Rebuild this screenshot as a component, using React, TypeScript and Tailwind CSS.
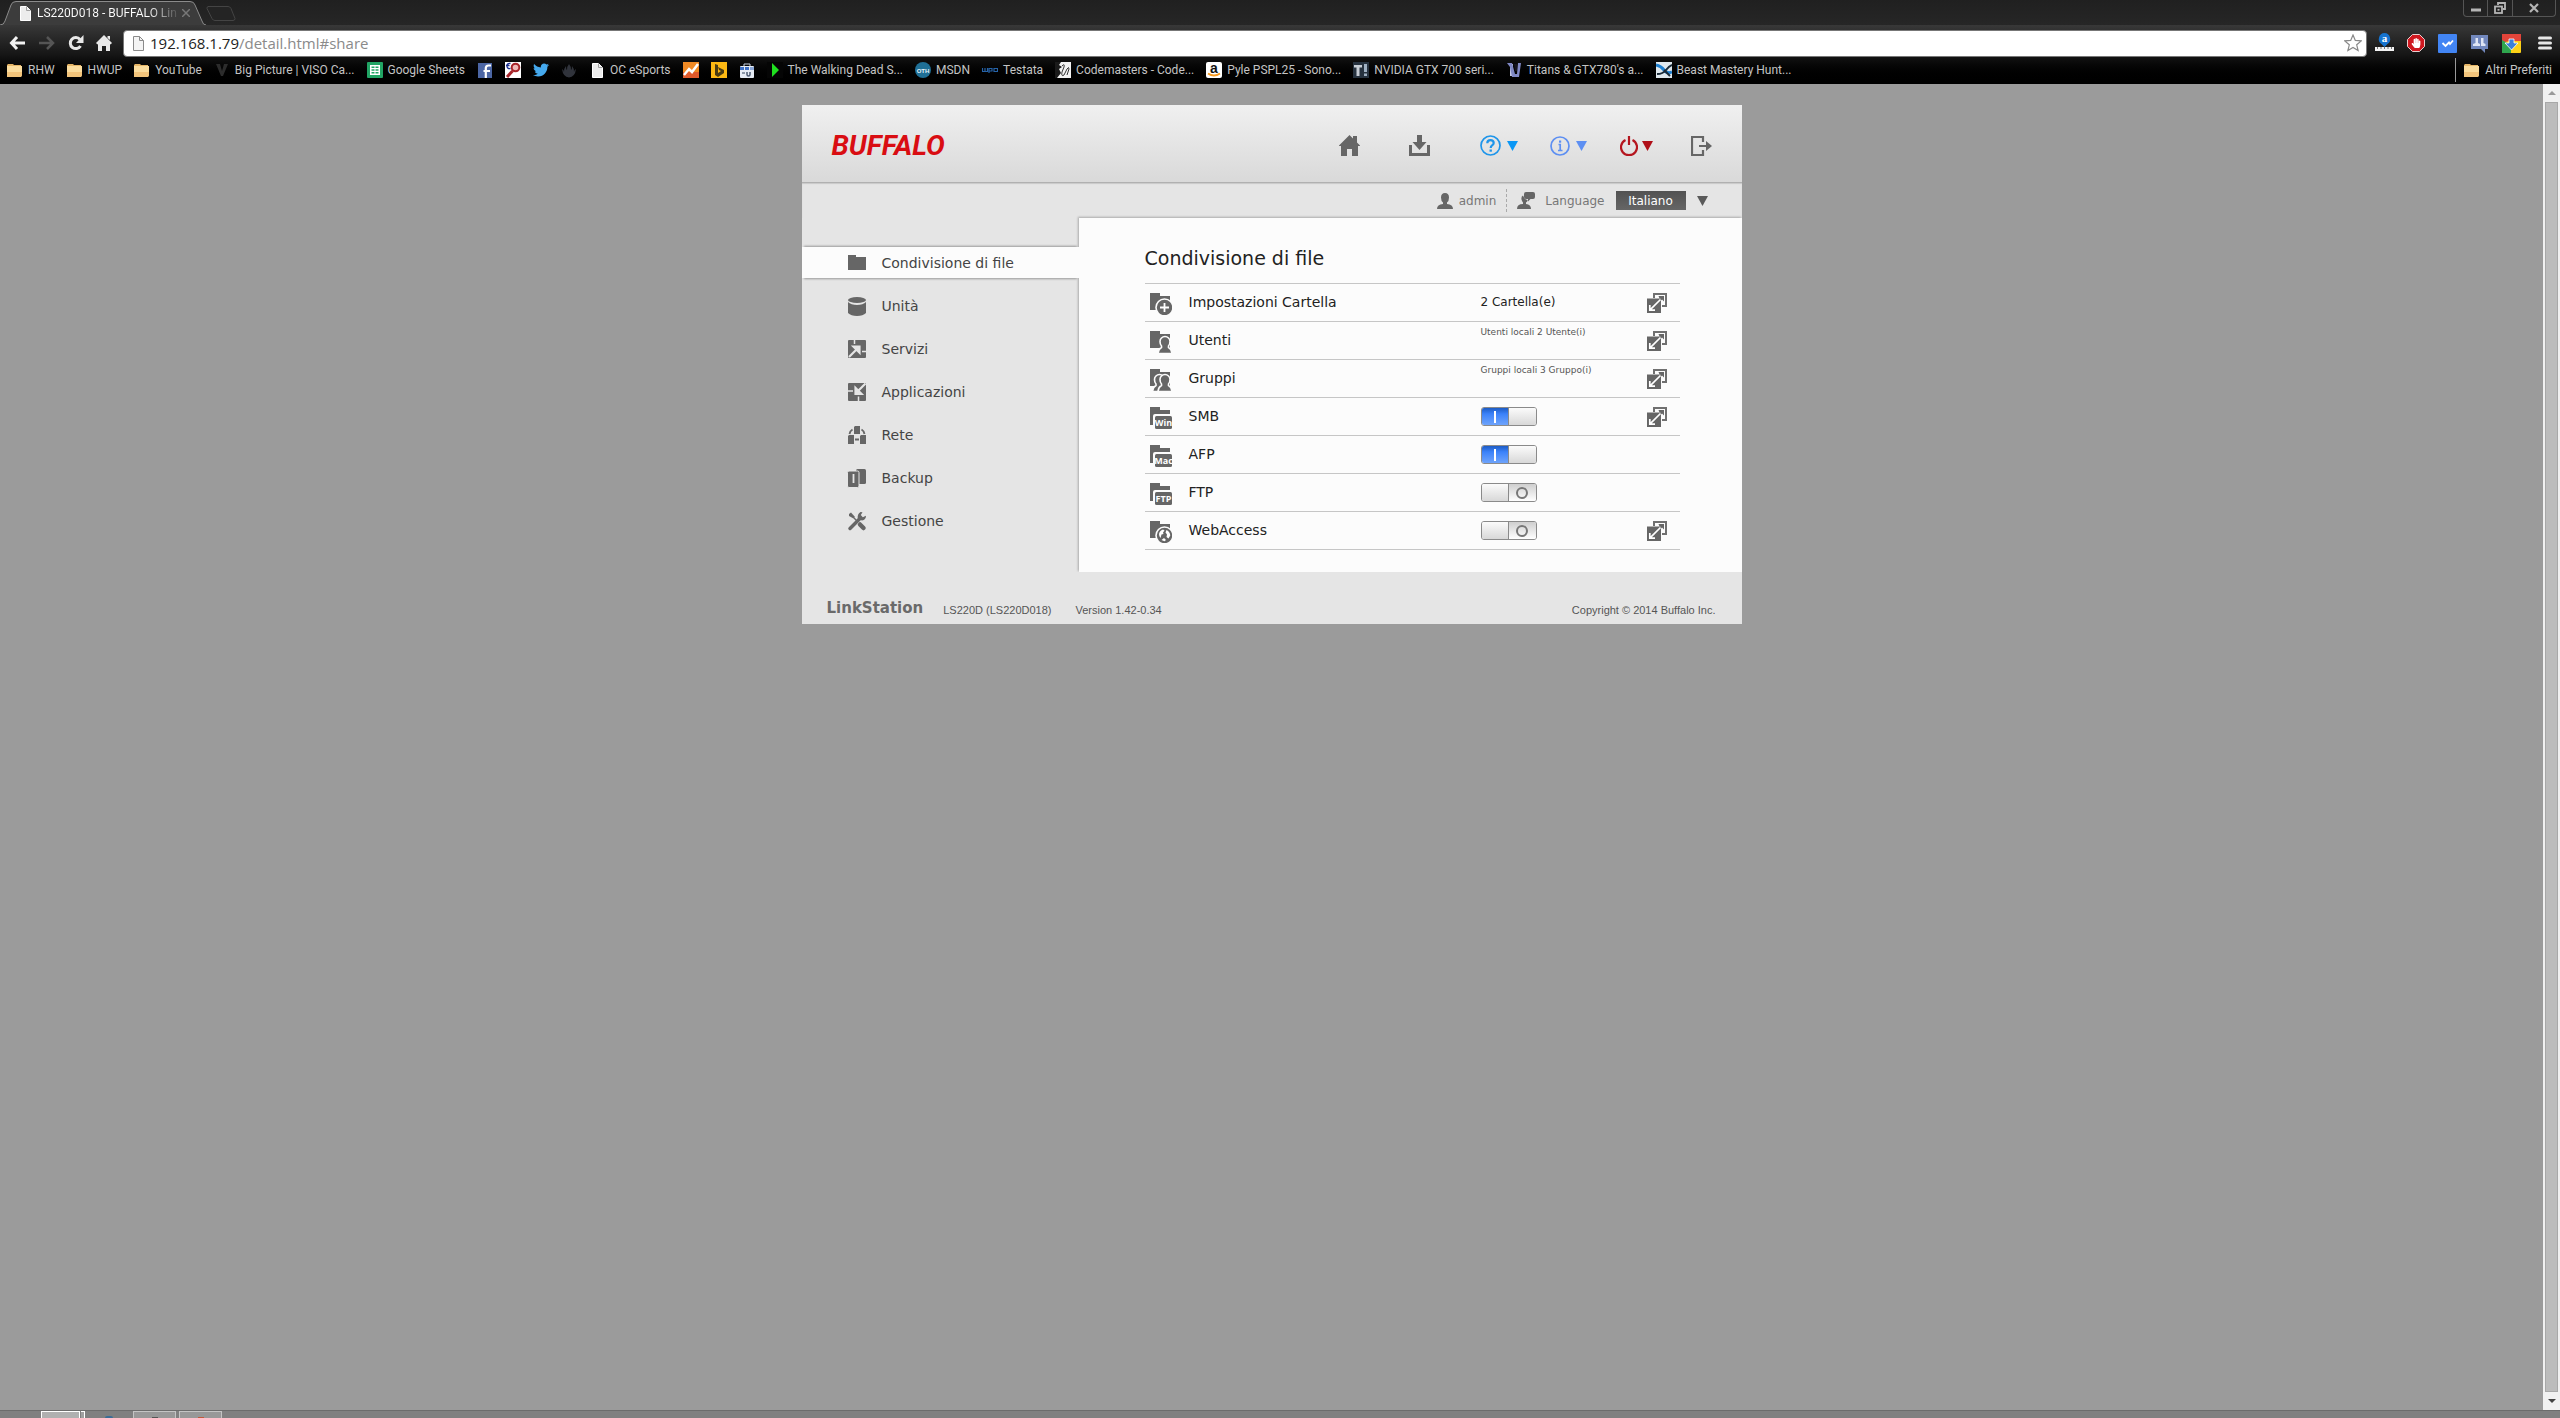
import React, { useState } from 'react';
import { FaTwitter, FaHandPaper } from 'react-icons/fa';

const FolderYellow = () => (
  <svg className="w-4 h-4 shrink-0" viewBox="0 0 16 16">
    <path d="M0 3l1-1h5l1 1h7v11H0z" fill="#e5b567" />
    <path d="M0 4h15v9l-1 2H0z" fill="#fbdc9d" />
    <path d="M0 10h15v3l-1 2H0z" fill="#f3c47b" />
  </svg>
);

const PageIcon = ({ outline = false }: { outline?: boolean }) => (
  <svg className="w-4 h-4 shrink-0" viewBox="0 0 16 16">
    <path
      d="M3.5 1.5h6l4 4v10h-10z"
      fill={outline ? '#f4f4f4' : '#ececec'}
      stroke={outline ? '#8a8a8a' : '#ffffff'}
    />
    <path d="M9.5 1.5v4h4" fill="none" stroke={outline ? '#8a8a8a' : '#a0a0a0'} />
  </svg>
);

const favicons: Record<string, React.ReactNode> = {
  viso: <path d="M2 2l5 12h2l5-12-4 0-2 7-2-7z" fill="#2c2c2c" />,
  sheets: (
    <>
      <rect width="16" height="16" rx="1" fill="#21a464" />
      <path d="M3 3h10v10H3z" fill="#fff" />
      <path d="M4.500 4.500h3v1.500h-3zM8.500 4.500h3v1.500h-3zM4.500 7.300h3v1.500h-3zM8.500 7.300h3v1.500h-3zM4.500 10h3v1.500h-3zM8.500 10h3v1.500h-3z" fill="#21a464" />
    </>
  ),
  facebook: (
    <>
      <rect x="1" y="1" width="14" height="15" fill="#4c66a4" />
      <path d="M8.800 16V6.200q0-2.700 2.700-2.700H14M6.500 9h6.500" stroke="#fff" strokeWidth="2.200" fill="none" />
    </>
  ),
  trova: (
    <>
      <rect width="16" height="16" fill="#fff" />
      <circle cx="10.500" cy="5.500" r="3.800" fill="#f0b8b8" stroke="#a8242a" strokeWidth="2" />
      <path d="M7.500 9L2 15" stroke="#a8242a" strokeWidth="3" />
      <path d="M5.500 1.500Q2 1 2 4t3.500 2.500M1 3.500h3.500" stroke="#1b2f8f" strokeWidth="1.300" fill="none" />
    </>
  ),
  flame: (
    <path d="M1 7q2 1 2 3 0-4 2-6 0 3 1 4 0-4 2-6 2 2 2 6 1-1 1-4 2 2 2 6 0-2 2-3-1 8-7 8.500Q2 15 1 7z" fill="#30333b" />
  ),
  analytics: (
    <>
      <rect width="16" height="16" fill="#f08a24" />
      <path d="M0 10h16v6H0z" fill="#e05a2b" />
      <path d="M1 13l5-6 3 3 6-8" stroke="#fff" strokeWidth="2.500" fill="none" />
    </>
  ),
  bing: (
    <>
      <rect width="16" height="16" fill="#fdb813" />
      <path d="M4 2l3 1v8l3-2-2-1-1-3 6 3v3l-6 4-3-2z" fill="#4a3b12" />
    </>
  ),
  store: (
    <>
      <path d="M5 4V2h6v2" stroke="#c7d2e2" fill="none" />
      <rect x="1" y="4" width="14" height="12" rx="1" fill="#e6ecf5" />
      <path d="M1 5h4v3H1zM6 5h4v3H6z" fill="#3d6fc4" />
      <path d="M11 5h4v3h-4z" fill="#8aa6d6" />
      <path d="M8 10v2.500q0 1.500 1.500 1.500T11 12.500V10" stroke="#4b5a72" strokeWidth="1.500" fill="none" />
      <path d="M3 10h3v2H3z" fill="#8b97a8" />
    </>
  ),
  play: (
    <>
      <rect width="16" height="16" fill="#050505" />
      <path d="M5 1l7 7-7 7z" fill="#1fe01f" />
    </>
  ),
  oth: (
    <>
      <circle cx="8" cy="8" r="8" fill="#1f6f96" />
      <text x="8" y="10.500" textAnchor="middle" fontSize="6" fontWeight="700" fill="#e5f2f8" fontFamily="Liberation Sans, sans-serif">OTH</text>
    </>
  ),
  wpo: (
    <path d="M.5 6v3.500h5V6M3 6v3M7 11V6.500h3v2.500H7M12 6.500h3.500v3H12z" stroke="#2663a8" strokeWidth="1.200" fill="none" />
  ),
  code: (
    <>
      <rect width="16" height="16" fill="#f2f2f2" />
      <path d="M0 0h6L4 3l3 2-3 2 2 4-4 5H0z" fill="#1a1a1a" />
      <path d="M7 4q3-3 2 1l-2 5q-1 5 2 3l3-6q2-3 2 0l-2 6" stroke="#333" fill="none" />
    </>
  ),
  amazon: (
    <>
      <rect width="16" height="16" rx="2" fill="#fff" />
      <text x="8" y="10.500" textAnchor="middle" fontSize="14" fontWeight="700" fill="#111" fontFamily="Liberation Sans, sans-serif">a</text>
      <path d="M2 11.500q6 4 12 0" stroke="#f79a1f" strokeWidth="1.800" fill="none" />
    </>
  ),
  ti: (
    <>
      <rect width="16" height="16" fill="#26323f" />
      <path d="M1 3h8v2.500H6.500V14h-3V5.500H1z" fill="#c5ccd4" />
      <path d="M11 2h3v8h-3zM11 11.500h3V14h-3z" fill="#9fb0c2" />
    </>
  ),
  titans: (
    <>
      <path d="M4 2h3v12H4z" fill="#c3c8e6" />
      <path d="M1 1h5l3 11h2l1-11h3l-2 14H6L4 5z" fill="#7f88c4" />
      <path d="M8 2h3v7H9z" fill="#14141f" />
    </>
  ),
  beast: (
    <>
      <rect width="16" height="16" fill="#dfe8ee" />
      <path d="M0 3q5 1 8 5t8 2" stroke="#1d7fd0" strokeWidth="3" fill="none" />
      <path d="M1 12q6 0 9-4t6-5M8 8l6 6" stroke="#1a2a38" strokeWidth="2" fill="none" />
    </>
  ),
};

type Bookmark = { icon: string; title?: string };

const bookmarks: Bookmark[] = [
  { icon: 'folder', title: 'RHW' },
  { icon: 'folder', title: 'HWUP' },
  { icon: 'folder', title: 'YouTube' },
  { icon: 'viso', title: 'Big Picture | VISO Ca...' },
  { icon: 'sheets', title: 'Google Sheets' },
  { icon: 'facebook' },
  { icon: 'trova' },
  { icon: 'twitter' },
  { icon: 'flame' },
  { icon: 'page', title: 'OC eSports' },
  { icon: 'analytics' },
  { icon: 'bing' },
  { icon: 'store' },
  { icon: 'play', title: 'The Walking Dead S...' },
  { icon: 'oth', title: 'MSDN' },
  { icon: 'wpo', title: 'Testata' },
  { icon: 'code', title: 'Codemasters - Code...' },
  { icon: 'amazon', title: 'Pyle PSPL25 - Sono...' },
  { icon: 'ti', title: 'NVIDIA GTX 700 seri...' },
  { icon: 'titans', title: "Titans & GTX780's a..." },
  { icon: 'beast', title: 'Beast Mastery Hunt...' },
];

const Favicon = ({ name }: { name: string }) => {
  if (name === 'folder') return <FolderYellow />;
  if (name === 'page') return <PageIcon />;
  if (name === 'twitter') return <FaTwitter className="w-4 h-4 shrink-0 text-[#45a9ee]" />;
  return (
    <svg className="w-4 h-4 shrink-0" viewBox="0 0 16 16">
      {favicons[name]}
    </svg>
  );
};

const BrowserChrome = () => (
  <header className="font-['Roboto',sans-serif] text-xs text-[#c4c4c4] shrink-0">
    <div className="flex items-end h-[25px] bg-linear-to-b from-[#202020] to-[#262626] relative">
      <div className="relative w-[206px] h-6">
        <svg className="absolute inset-0 w-full h-full" viewBox="0 0 206 24" preserveAspectRatio="none">
          <path d="M0 24Q4 24 5 20L11 4Q12 .5 16 .5H190Q194 .5 195 4L202 20Q203 24 206 24" fill="#3c3c3c" stroke="#8b8b8b" />
        </svg>
        <div className="relative flex items-center h-full pl-[17px] pr-4">
          <PageIcon />
          <span className="ml-1 whitespace-nowrap bg-linear-to-r from-white from-80% to-[#555] bg-clip-text text-transparent">
            LS220D018 - BUFFALO Lin
          </span>
          <button aria-label="Chiudi scheda" className="ml-auto">
            <svg className="w-2 h-2" viewBox="0 0 8 8">
              <path d="M0 0l8 8M8 0L0 8" stroke="#777" strokeWidth="1.500" />
            </svg>
          </button>
        </div>
      </div>
      <button aria-label="Nuova scheda" className="mb-1">
        <svg className="w-[30px] h-[15px]" viewBox="0 0 30 15">
          <path d="M2 .5h20q2 0 3 2l4 10q0 2-2 2H9q-2 0-3-2L1 2.500q0-2 1-2z" fill="#242424" stroke="#444" />
        </svg>
      </button>
      <div className="ml-auto mr-1 self-start flex h-[17px] rounded-b border border-t-0 border-[#555] divide-x divide-[#555]">
        <button aria-label="Riduci" className="w-6 grid place-items-center">
          <svg className="w-3 h-3" viewBox="0 0 12 12"><path d="M1 6.500h10v3H1z" fill="#b5b5b5" /></svg>
        </button>
        <button aria-label="Ripristina" className="w-[25px] grid place-items-center">
          <svg className="w-3 h-3" viewBox="0 0 12 12" fill="none" stroke="#b5b5b5" strokeWidth="1.800">
            <path d="M4 3V1h7v6H9" />
            <rect x="1" y="4.500" width="7" height="6.500" />
            <path d="M3.500 7.800h2" />
          </svg>
        </button>
        <button aria-label="Chiudi" className="w-[42px] grid place-items-center">
          <svg className="w-[10px] h-[10px]" viewBox="0 0 10 10"><path d="M1 1l8 8M9 1L1 9" stroke="#b5b5b5" strokeWidth="2.200" /></svg>
        </button>
      </div>
    </div>

    <div className="bg-linear-to-b from-[#383838] via-[#161616] to-black">
      <div className="flex items-center h-[34px] pt-0.5 pl-[9px] pr-2">
        <button aria-label="Indietro">
          <svg className="w-4 h-4" viewBox="0 0 16 16" fill="none" stroke="#f2f2f2" strokeWidth="3">
            <path d="M8 2L2.500 8 8 14M3 8h13" />
          </svg>
        </button>
        <button aria-label="Avanti" className="ml-[14px]">
          <svg className="w-4 h-4" viewBox="0 0 16 16" fill="none" stroke="#555" strokeWidth="2.500">
            <path d="M8 2l6 6-6 6M13 8H0" />
          </svg>
        </button>
        <button aria-label="Ricarica" className="ml-[13px]">
          <svg className="w-4 h-4" viewBox="0 0 16 16">
            <path d="M12.500 11A5.500 5.500 0 1 1 12 4.500" fill="none" stroke="#e8e8e8" strokeWidth="3" />
            <path d="M15.500 0v8H8z" fill="#e8e8e8" />
          </svg>
        </button>
        <button aria-label="Home" className="ml-3">
          <svg className="w-4 h-4" viewBox="0 0 16 16">
            <path d="M8 0l8 8-1.500 1.500L14 9v7h-4v-5H6v5H2V9l-.5.5L0 8zM11.500 1H14v4l-2.500-2z" fill="#e8e8e8" />
          </svg>
        </button>
        <div className="ml-[11px] flex flex-1 items-center h-[27px] pl-1.5 pr-1 bg-white border border-[#777] rounded-sm font-['Open_Sans',sans-serif]">
          <PageIcon outline />
          <div className="relative ml-1 flex-1 text-[15px] leading-6">
            <input
              aria-label="Indirizzo"
              defaultValue="192.168.1.79/detail.html#share"
              className="w-full bg-transparent text-transparent caret-black outline-none"
            />
            <div aria-hidden className="absolute inset-0 pointer-events-none text-[#8a8a8a]">
              <span className="text-[#222]">192.168.1.79</span>/detail.html#share
            </div>
          </div>
          <button aria-label="Aggiungi ai preferiti">
            <svg className="w-[18px] h-[18px]" viewBox="0 0 18 18">
              <path d="M9 1l2.300 5.400 5.900.5-4.500 3.900 1.400 5.800L9 13.500l-5.100 3.100 1.400-5.800L.8 6.900l5.900-.5z" fill="#fff" stroke="#888" strokeWidth="1.200" />
            </svg>
          </button>
        </div>
        <div className="flex items-center gap-[13px] ml-2">
          <button aria-label="Alexa">
            <svg className="w-[19px] h-5" viewBox="0 0 19 20">
              <path d="M9.500 0a6 6 0 0 1 3 11l-3 3-3-3a6 6 0 0 1 3-11z" fill="#1573cf" />
              <text x="9.500" y="9" textAnchor="middle" fontSize="11" fontWeight="700" fill="#fff" fontFamily="Liberation Serif, serif">a</text>
              <path d="M0 14h19v4H0z" fill="#f3f3f3" />
              <path d="M2.500 14v2M6 14v2M9.500 14v2M13 14v2M16.500 14v2" stroke="#777" />
            </svg>
          </button>
          <button aria-label="AdBlock" className="relative grid place-items-center w-[18px] h-[18px]">
            <svg className="absolute inset-0" viewBox="0 0 18 18">
              <path d="M5.500.5h7l5 5v7l-5 5h-7l-5-5v-7z" fill="#cf1820" stroke="#e8d0d0" />
            </svg>
            <FaHandPaper className="relative w-2.5 h-2.5 text-white" />
          </button>
          <button aria-label="Verifica">
            <svg className="w-[19px] h-[19px]" viewBox="0 0 19 19">
              <rect width="19" height="19" rx="1" fill="#4285f4" />
              <path d="M4.500 9l3 3 3.500-3.500 1 1.500 3-3.500" fill="none" stroke="#fff" strokeWidth="1.800" />
            </svg>
          </button>
          <button aria-label="Gruppi">
            <svg className="w-[19px] h-[19px]" viewBox="0 0 19 19">
              <path d="M1 1h17v14h-3v4l-4-4H1z" fill="#7288bd" />
              <path d="M5.500 4h2.500v5l2 1v2H3v-2l2.500-1zM11 4h2.500v5l2 1v2H11z" fill="#dfe5f4" />
            </svg>
          </button>
          <button aria-label="Download">
            <svg className="w-[19px] h-[19px]" viewBox="0 0 19 19">
              <rect width="19" height="19" rx="1" fill="#fcd116" />
              <path d="M0 0h19v7H7L0 9z" fill="#e2443a" />
              <path d="M0 6l9 5v8H0z" fill="#2fa64e" />
              <path d="M7 5h5v4h4l-6.500 7L3 9h4z" fill="#3b7fd8" stroke="#fff" strokeWidth=".8" />
            </svg>
          </button>
          <button aria-label="Menu" className="ml-1">
            <svg className="w-[14px] h-[14px]" viewBox="0 0 14 14">
              <path d="M1.500 2h11M1.500 7h11M1.500 12h11" stroke="#e6e6e6" strokeWidth="3" strokeLinecap="round" />
            </svg>
          </button>
        </div>
      </div>

      <nav aria-label="Preferiti" className="flex items-center h-[25px] pl-[7px] pr-2 pb-1">
        <ul className="flex items-center gap-3">
          {bookmarks.map((b) => (
            <li key={b.icon + b.title}>
              <a href="#" aria-label={b.title ?? b.icon} className="flex items-center gap-[5px] whitespace-nowrap">
                <Favicon name={b.icon} />
                {b.title}
              </a>
            </li>
          ))}
        </ul>
        <a href="#" className="ml-auto flex items-center gap-[5px] pl-2 h-6 border-l border-[#999] whitespace-nowrap">
          <FolderYellow />
          Altri Preferiti
        </a>
      </nav>
    </div>
  </header>
);

const menu = [
  {
    label: 'Condivisione di file',
    icon: <path d="M0 1h8v2h10v13H0z" />,
  },
  {
    label: 'Unità',
    icon: (
      <>
        <ellipse cx="9" cy="3" rx="9" ry="3" />
        <path d="M0 5q3 3 9 3t9-3v11q-3 3-9 3t-9-3z" />
      </>
    ),
  },
  {
    label: 'Servizi',
    icon: (
      <>
        <rect width="18" height="18" rx="1" />
        <path d="M1 17L9 9M5.500 6.500h6v6z" stroke="#e5e5e5" strokeWidth="2.200" fill="#e5e5e5" />
        <path d="M6.500 0v4M14 11.500h4" stroke="#e5e5e5" strokeWidth="1.500" />
      </>
    ),
  },
  {
    label: 'Applicazioni',
    icon: (
      <>
        <rect width="18" height="18" rx="1" />
        <path d="M17.500.5L10 8M7.500 5v6h6z" stroke="#e5e5e5" strokeWidth="2.200" fill="#e5e5e5" />
        <path d="M0 8h5M10.500 13.500V18" stroke="#e5e5e5" strokeWidth="1.500" />
      </>
    ),
  },
  {
    label: 'Rete',
    icon: (
      <>
        <path d="M7 0h5v8H6V1zM1 9h5v9H0v-8zM13 9h5v9h-6v-8z" />
        <path d="M4.500 3.500Q2 5 1.500 8M13.500 3.500Q16 5 16.500 8M7 13.500h4" fill="none" stroke="#666" strokeWidth="1.800" />
      </>
    ),
  },
  {
    label: 'Backup',
    icon: (
      <>
        <rect x="8" width="10" height="15" rx="1.500" />
        <rect x="-.5" y="2" width="11.500" height="16.500" rx="1.500" stroke="#e5e5e5" />
        <path d="M5.500 5v9" stroke="#e5e5e5" strokeWidth="1.800" />
      </>
    ),
  },
  {
    label: 'Gestione',
    icon: (
      <>
        <path d="M1 2l2-1.500 4 4.500-1.500 1.500L1 4z" />
        <path d="M6 6l4 4" stroke="#666" strokeWidth="1.500" />
        <path d="M12 12.500l3.500 3.500" stroke="#666" strokeWidth="4.500" strokeLinecap="round" />
        <path d="M2 16.500L12 6.500" stroke="#666" strokeWidth="3.500" strokeLinecap="round" />
        <path d="M12.500 0l2 .2L12.800 3l2 2.200L18 3.800Q18 8 14 8.500L9.800 7q-.8-5 2.700-7z" />
      </>
    ),
  },
];

const Person = ({ x }: { x: number }) => (
  <g transform={`translate(${x} 0)`}>
    <path
      d="M8.500 5.500a5 5 0 0 1 5 5q0 3-1.500 4.500v1.500q3 1.500 3.500 6H1.500q.5-4.500 3.500-6V15q-1.500-1.500-1.500-4.500a5 5 0 0 1 5-5z"
      stroke="#fcfcfc"
      strokeWidth="1.600"
    />
  </g>
);

const Badge = ({ text }: { text: string }) => (
  <>
    <path d="M0 0h10v3h10v4H5q-2 0-2 2v9H0z" />
    <rect x="5" y="9" width="17" height="13" rx="1.500" />
    <text x="13.500" y="19" textAnchor="middle" fontSize="9" fontWeight="700" fill="#fff" fontFamily="Liberation Sans Narrow, Open Sans, sans-serif">{text}</text>
  </>
);

const folder = <path d="M0 0h10v3h10v14H0z" />;

type Row = {
  label: string;
  icon: React.ReactNode;
  value?: string;
  note?: string;
  on?: boolean;
  edit: boolean;
};

const rows: Row[] = [
  {
    label: 'Impostazioni Cartella',
    icon: (
      <>
        {folder}
        <circle cx="14.500" cy="14.500" r="8.500" stroke="#fcfcfc" strokeWidth="1.600" />
        <path d="M14.500 10v9M10 14.500h9" stroke="#fff" strokeWidth="1.800" />
      </>
    ),
    value: '2 Cartella(e)',
    edit: true,
  },
  { label: 'Utenti', icon: <>{folder}<Person x={6.5} /></>, note: 'Utenti locali 2 Utente(i)', edit: true },
  { label: 'Gruppi', icon: <>{folder}<Person x={1} /><Person x={6.5} /></>, note: 'Gruppi locali 3 Gruppo(i)', edit: true },
  { label: 'SMB', icon: <Badge text="Win" />, on: true, edit: true },
  { label: 'AFP', icon: <Badge text="Mac" />, on: true, edit: false },
  { label: 'FTP', icon: <Badge text="FTP" />, on: false, edit: false },
  {
    label: 'WebAccess',
    icon: (
      <>
        {folder}
        <circle cx="14.500" cy="14.500" r="8.500" stroke="#fcfcfc" strokeWidth="1.600" />
        <path d="M9 13q.5-3.500 4-4.500l1.500 1-1.500 2 .5 1.500-2 .5L10.500 17Q9 15.500 9 13zM16.500 9q3.500 1.500 3.800 5.500l-1.800 3-2-1.500.5-2.500-1.500-2zM11.500 19l2.500-2 2 2-1.500 1.200z" fill="#fff" />
      </>
    ),
    on: false,
    edit: true,
  },
];

const Toggle = ({ initial, label }: { initial: boolean; label: string }) => {
  const [on, setOn] = useState(initial);
  return (
    <button
      role="switch"
      aria-checked={on}
      aria-label={label}
      onClick={() => setOn(!on)}
      className="mt-[9px] flex w-14 h-[19px] rounded-[3px] border border-[#8a8a8a] overflow-hidden"
    >
      {on ? (
        <>
          <span className="flex-1 h-full grid place-items-center bg-linear-to-b from-[#1d5cc4] via-[#3b82fa] via-35% to-[#6ea3fb]">
            <span className="w-0.5 h-3 bg-white" />
          </span>
          <span className="flex-1 h-full border-l border-[#8a8a8a] bg-linear-to-b from-[#fbfbfb] to-[#d8d8d8]" />
        </>
      ) : (
        <>
          <span className="flex-1 h-full border-r border-[#8a8a8a] bg-linear-to-b from-[#fbfbfb] to-[#d8d8d8]" />
          <span className="flex-1 h-full grid place-items-center bg-linear-to-b from-[#cfcfcf] to-white">
            <span className="w-3 h-3 rounded-full border-2 border-[#777]" />
          </span>
        </>
      )}
    </button>
  );
};

const EditIcon = () => (
  <svg className="w-5 h-5" viewBox="0 0 20 20">
    <path d="M7 5V1h12v12h-4" fill="none" stroke="#707070" strokeWidth="2" />
    <rect y="5.500" width="14" height="14.500" fill="#666" />
    <path d="M10.500 9.500L19 1" stroke="#fcfcfc" strokeWidth="0" />
    <path d="M14 6l2-2" stroke="#666" strokeWidth="1.600" />
    <path d="M11.500 3h5.500v5.500l-2-2-1 1V5.500h-1.500z" fill="#666" />
    <path d="M2.800 17.200L13.500 6.500M2.800 12v5.200H8" fill="none" stroke="#fff" strokeWidth="1.700" />
  </svg>
);

const Triangle = ({ color }: { color: string }) => (
  <svg className="w-[11px] h-[10px]" viewBox="0 0 11 10">
    <path d="M0 0h11L5.500 10z" fill={color} />
  </svg>
);

const ConsoleHeader = () => (
  <div className="flex items-center h-[77px] pl-[30px] pr-[30px] pt-1 bg-linear-to-b from-[#f0f0f0] to-[#d9d9d9]">
    <a href="#" className="font-['Liberation_Sans_Narrow','Roboto',sans-serif] text-[28px] leading-8 font-bold italic text-[#d90d12]">
      BUFFALO
    </a>
    <div className="ml-auto flex items-center text-[#666]">
      <button aria-label="Home" className="mr-[49px]">
        <svg className="w-[21px] h-[21px]" viewBox="0 0 21 21" fill="currentColor">
          <path d="M10.500 0L14 3.500V1h4v6.500l3 3V11h-2v10h-6v-7H8v7H2V11H0v-.5z" />
        </svg>
      </button>
      <button aria-label="Download" className="mr-[50px]">
        <svg className="w-[21px] h-[21px]" viewBox="0 0 21 21" fill="currentColor">
          <path d="M8 0h5v7h4.500l-7 8-7-8H8z" />
          <path d="M0 10h3v8h15v-8h3v11H0z" />
        </svg>
      </button>
      <button aria-label="Guida" className="mr-8 flex items-center gap-1.5">
        <svg className="w-[21px] h-[21px]" viewBox="0 0 21 21" fill="none" stroke="#1e95ea" strokeWidth="1.700">
          <circle cx="10.500" cy="10.500" r="9.500" />
          <path d="M7.300 8.200q0-3 3.200-3t3.200 2.700q0 1.400-1.600 2.500-1.400 1-1.400 2.600" strokeWidth="2.200" />
          <path d="M9.500 14.500h2.400v2.200H9.500z" fill="#1e95ea" stroke="none" />
        </svg>
        <Triangle color="#0a97f5" />
      </button>
      <button aria-label="Informazioni" className="mr-[33px] flex items-center gap-1.5">
        <svg className="w-5 h-5" viewBox="0 0 20 20" fill="none" stroke="#5d8ff2" strokeWidth="1.700">
          <circle cx="10" cy="10" r="9" />
          <path d="M8.500 8.500H10.200V14M8 14.500h4.500" />
          <path d="M9 4.500h2.200v2.200H9z" fill="#5d8ff2" stroke="none" />
        </svg>
        <Triangle color="#5d8ff2" />
      </button>
      <button aria-label="Spegni" className="mr-[38px] flex items-center gap-1">
        <svg className="w-[18px] h-5" viewBox="0 0 18 20" fill="none" stroke="#b5161f" strokeWidth="2.200">
          <path d="M5.500 4A8 8 0 1 0 12.500 4M9 0v9" />
        </svg>
        <Triangle color="#b00f18" />
      </button>
      <button aria-label="Esci">
        <svg className="w-[21px] h-5" viewBox="0 0 21 20" fill="none" stroke="currentColor" strokeWidth="2.200">
          <path d="M12 6V1H1v18h11v-5M8 10h8" />
          <path d="M15 5l6 5-6 5z" fill="currentColor" stroke="none" />
        </svg>
      </button>
    </div>
  </div>
);

const ConsoleUserBar = () => (
  <div className="flex items-center justify-end h-9 pr-[34px] border-t border-[#b0b0b0] shadow-[inset_0_1px_1px_#c8c8c8] text-xs text-[#777]">
    <svg className="w-4 h-4" viewBox="0 0 16 16" fill="#666">
      <path d="M8 0q4 0 4 4.500Q12 8 10 9.500V11q6 .5 6 5H0q0-4.500 6-5V9.500Q4 8 4 4.500 4 0 8 0z" />
    </svg>
    <span className="ml-1.5">admin</span>
    <span className="mx-[10px] h-[23px] border-l border-dashed border-[#aaa]" />
    <svg className="w-[18px] h-[17px]" viewBox="0 0 18 17" fill="#666">
      <path d="M6 3.500q-2 1-1.500 4Q5 9.500 6 10.500V12q-6 0-6 5h14q0-4.500-5-5v-1.500Q11 9 10.500 8 7 7 6 3.500z" />
      <path d="M9 0h7q2 0 2 2v3q0 2-2 2h-2.500L11 9.500V7H9Q7 7 7 5V2q0-2 2-2z" />
    </svg>
    <label htmlFor="language" className="ml-[10px]">Language</label>
    <select
      id="language"
      className="ml-[11px] w-[70px] h-[19px] appearance-none text-center bg-linear-to-b from-[#525252] to-[#666] text-white outline-none"
    >
      <option>Italiano</option>
    </select>
    <span className="ml-[11px]"><Triangle color="#5a5a5a" /></span>
  </div>
);

export default function App() {
  return (
    <div className="flex flex-col h-screen overflow-hidden bg-[#9b9b9b]">
      <BrowserChrome />

      <div className="flex flex-1 min-h-0">
        <div className="flex-1 pt-[21px]">
          <div className="w-full max-w-[940px] mx-auto bg-[#e5e5e5] font-['DejaVu_Sans',sans-serif]">
            <ConsoleHeader />
            <ConsoleUserBar />

            <div className="flex">
              <ul className="w-[277px] shrink-0 pt-[29px] flex flex-col gap-3">
                {menu.map((m, i) => (
                  <li key={m.label}>
                    <a
                      href="#"
                      className={`flex items-center h-[31px] pl-[46px] gap-4 text-sm text-[#444] ${
                        i === 0 ? 'relative z-10 bg-[#fcfcfc] shadow-[0_3px_2px_-2px_#999,0_-3px_2px_-2px_#999]' : ''
                      }`}
                    >
                      <svg className="w-[18px] h-[18px] overflow-visible" viewBox="0 0 18 18" fill="#666">
                        {m.icon}
                      </svg>
                      {m.label}
                    </a>
                  </li>
                ))}
              </ul>

              <main className="relative flex-1 bg-[#fcfcfc] pl-[66px] pr-[62px] pt-6 pb-[22px] shadow-[-1px_-1px_2px_#aaa]">
                <h1 className="text-[19px] leading-8 mb-[9px] text-[#222]">Condivisione di file</h1>
                <ul className="border-t border-[#c6c6c6]">
                  {rows.map((r) => (
                    <li key={r.label} className="flex h-[38px] pl-[5px] border-b border-[#c6c6c6] text-[#222]">
                      <svg className="w-[22px] h-[22px] mt-[9px] shrink-0" viewBox="0 0 22 22" fill="#666">
                        {r.icon}
                      </svg>
                      <span className="ml-[17px] w-[292px] text-sm leading-9">{r.label}</span>
                      <div className="flex-1">
                        {r.value && <span className="text-xs leading-9">{r.value}</span>}
                        {r.note && <p className="mt-1 text-[9px] leading-3 text-[#555]">{r.note}</p>}
                        {r.on !== undefined && <Toggle initial={r.on} label={r.label} />}
                      </div>
                      {r.edit && (
                        <button aria-label={`Modifica ${r.label}`} className="mr-[13px] mt-[9px] self-start">
                          <EditIcon />
                        </button>
                      )}
                    </li>
                  ))}
                </ul>
              </main>
            </div>

            <footer className="relative flex items-end h-[52px] pl-[25px] pr-[26px] pb-1.5 bg-[#e5e5e5] font-['Liberation_Sans',sans-serif] text-[11px] leading-4 text-[#555]">
              <span className="font-['DejaVu_Sans',sans-serif] text-[15px] leading-5 font-bold text-[#6a6a6a]">LinkStation</span>
              <span className="ml-5">LS220D (LS220D018)</span>
              <span className="ml-6">Version 1.42-0.34</span>
              <span className="ml-auto">Copyright © 2014 Buffalo Inc.</span>
            </footer>
          </div>
        </div>

        <div className="w-[17px] flex flex-col items-center bg-[#f1f1f1]">
          <button aria-label="Scorri su" className="h-[18px]">
            <svg className="w-2 h-1" viewBox="0 0 8 4"><path d="M4 0l4 4H0z" fill="#9a9a9a" /></svg>
          </button>
          <div className="flex-1 w-[13px] bg-[#bcbcbc] border border-[#a8a8a8]" />
          <button aria-label="Scorri giù" className="h-[18px]">
            <svg className="w-2 h-1" viewBox="0 0 8 4"><path d="M0 0h8L4 4z" fill="#444" /></svg>
          </button>
        </div>
      </div>

      <div className="flex h-2 shrink-0 pl-[41px] bg-[#808080] border-t border-[#6c6c6c]">
        <div className="w-[39px] bg-[#b0b0b0] border border-b-0 border-white" />
        <div className="w-1 ml-px bg-[#a0a0a0] border-r border-t border-white" />
        <div className="ml-[20px] mt-[5px] w-2 rounded-t-full bg-[#3b6d96]" />
        <div className="ml-5 w-[43px] flex justify-center bg-[#989898] border border-b-0 border-[#c4c4c4]">
          <span className="mt-[5px] w-[6px] bg-[#555]" />
        </div>
        <div className="ml-[3px] w-[43px] flex justify-center bg-[#989898] border border-b-0 border-[#c4c4c4]">
          <span className="mt-[5px] w-[6px] bg-[#c05a3c]" />
        </div>
      </div>
    </div>
  );
}
